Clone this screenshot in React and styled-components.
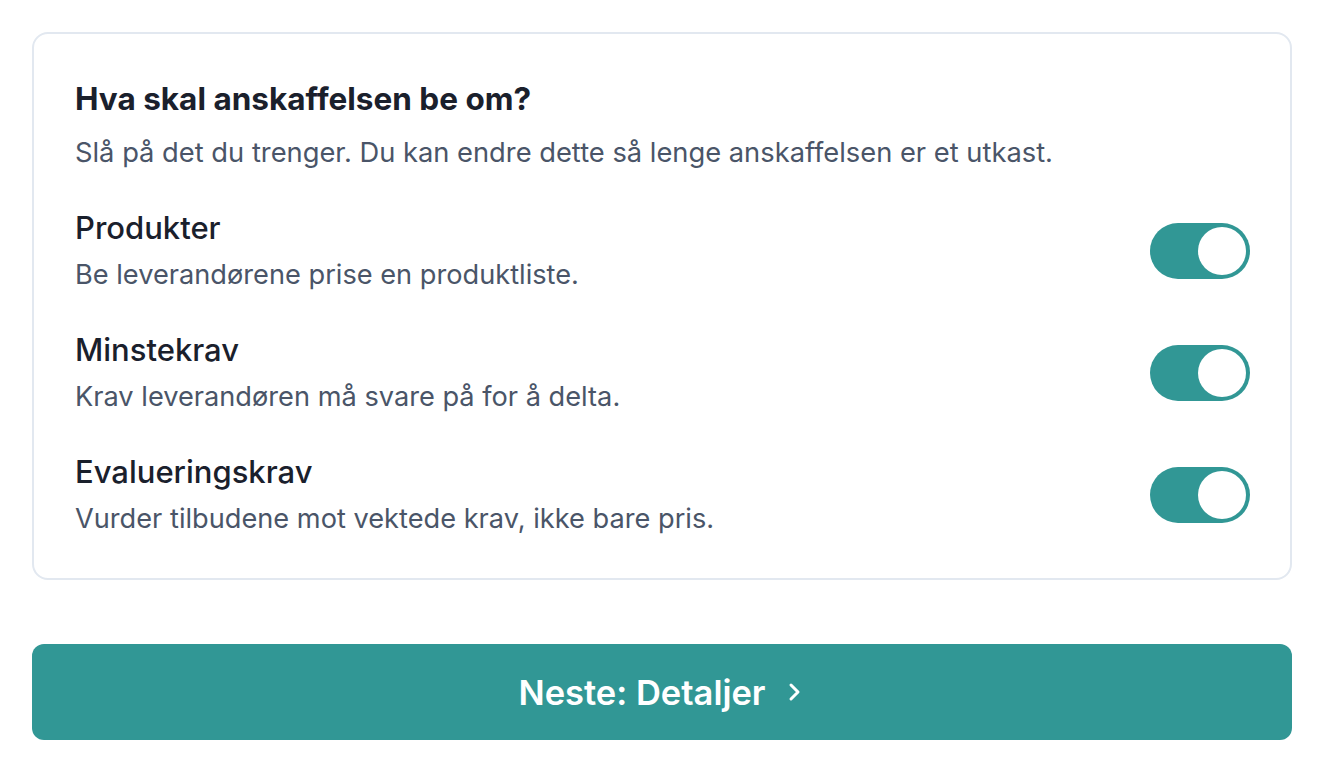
import React, { useState } from "react";
import styled, { createGlobalStyle } from "styled-components";

const Global = createGlobalStyle`
  html, body { margin: 0; padding: 0; background: #ffffff; }
  body { font-family: Inter, "Noto Sans", sans-serif; -webkit-font-smoothing: antialiased; }
`;

const Page = styled.div`
  padding: 32px 32px;
  display: flex;
  flex-direction: column;
  gap: 64px;
`;

const Card = styled.section`
  border: 2px solid #e2e8f0;
  border-radius: 16px;
  padding: 46px 40px 42px 41px;
  display: flex;
  flex-direction: column;
`;

const Title = styled.h2`
  margin: 0;
  font-size: 31.5px;
  line-height: 38px;
  font-weight: 700;
  color: #1a202c;
`;

const Subtitle = styled.p`
  margin: 18px 0 0;
  font-size: 27.3px;
  line-height: 34px;
  color: #4a5568;
`;

const List = styled.div`
  display: flex;
  flex-direction: column;
  gap: 39px;
  margin-top: 39px;
`;

const Row = styled.div`
  display: flex;
  align-items: center;
  justify-content: space-between;
  gap: 24px;
`;

const Texts = styled.div`
  display: flex;
  flex-direction: column;
  gap: 11px;
`;

const Label = styled.div`
  font-size: 31px;
  line-height: 38px;
  font-weight: 500;
  color: #1a202c;
`;

const Desc = styled.div`
  font-size: 27.2px;
  line-height: 34px;
  color: #4a5568;
`;

const Toggle = styled.button`
  width: 100px;
  height: 56px;
  border-radius: 28px;
  border: none;
  padding: 4px;
  background: ${(p) => (p.$on ? "#319795" : "#cbd5e0")};
  display: flex;
  justify-content: ${(p) => (p.$on ? "flex-end" : "flex-start")};
  align-items: center;
  cursor: pointer;
  flex-shrink: 0;
`;

const Knob = styled.span`
  width: 48px;
  height: 48px;
  border-radius: 50%;
  background: #ffffff;
  display: block;
`;

const NextButton = styled.button`
  height: 96px;
  border: none;
  border-radius: 12px;
  background: #319795;
  color: #ffffff;
  font-family: Inter, "Noto Sans", sans-serif;
  font-size: 34.5px;
  font-weight: 600;
  display: flex;
  align-items: center;
  justify-content: center;
  gap: 16px;
  cursor: pointer;
`;

const items = [
  { label: "Produkter", desc: "Be leverandørene prise en produktliste." },
  { label: "Minstekrav", desc: "Krav leverandøren må svare på for å delta." },
  { label: "Evalueringskrav", desc: "Vurder tilbudene mot vektede krav, ikke bare pris." },
];

export default function App() {
  const [on, setOn] = useState([true, true, true]);
  return (
    <Page>
      <Global />
      <Card>
        <Title>Hva skal anskaffelsen be om?</Title>
        <Subtitle>Slå på det du trenger. Du kan endre dette så lenge anskaffelsen er et utkast.</Subtitle>
        <List>
          {items.map((it, i) => (
            <Row key={it.label}>
              <Texts>
                <Label>{it.label}</Label>
                <Desc>{it.desc}</Desc>
              </Texts>
              <Toggle
                $on={on[i]}
                aria-pressed={on[i]}
                onClick={() => setOn(on.map((v, j) => (j === i ? !v : v)))}
              >
                <Knob />
              </Toggle>
            </Row>
          ))}
        </List>
      </Card>
      <NextButton>
        Neste: Detaljer
        <svg width="24" height="24" viewBox="0 0 24 24" fill="none" stroke="currentColor" strokeWidth="3" strokeLinecap="round" strokeLinejoin="round">
          <path d="M9 5l7 7-7 7" />
        </svg>
      </NextButton>
    </Page>
  );
}
